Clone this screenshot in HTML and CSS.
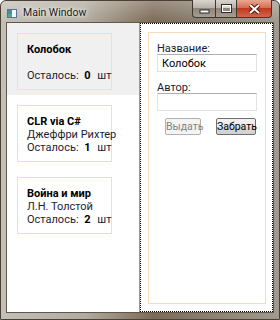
FILE: index.html
```html
<!DOCTYPE html>
<html lang="ru">
<head>
    <meta charset="UTF-8">
    <title>Main Window</title>
    <link rel="stylesheet" href="styles.css">
</head>
<body>
    <div class="window">
        <div class="titlebar">
            <svg class="app-icon" width="10" height="9" viewBox="0 0 10 9">
                <rect x="0.5" y="0.5" width="9" height="8" fill="#f4f6f8" stroke="#5b7390"/>
                <rect x="1" y="1" width="4" height="7" fill="#3b8fb0"/>
                <rect x="1" y="5" width="4" height="3" fill="#4fae6a"/>
            </svg>
            <span class="title">Main Window</span>
            <div class="caption-buttons">
                <div class="cap-btn cap-min">
                    <svg width="11" height="5" viewBox="0 0 11 5"><rect x="1" y="1" width="9" height="3" fill="#fff" stroke="#2e2b28" stroke-width="1"/></svg>
                </div>
                <div class="cap-btn cap-max">
                    <svg width="11" height="9" viewBox="0 0 11 9"><rect x="1" y="1" width="9" height="7" fill="none" stroke="#2e2b28" stroke-width="2"/><rect x="1.5" y="1.5" width="8" height="6" fill="none" stroke="#fff" stroke-width="1"/><rect x="2" y="2.5" width="7" height="1" fill="#fff"/></svg>
                </div>
                <div class="cap-btn cap-close">
                    <svg width="13" height="10" viewBox="0 0 13 10"><path d="M2 1 L11 9 M11 1 L2 9" stroke="#4a1a10" stroke-width="4"/><path d="M2 1 L11 9 M11 1 L2 9" stroke="#fff" stroke-width="2"/></svg>
                </div>
            </div>
        </div>

        <div class="client">
            <div class="book-list">
                <div class="book-item selected">
                    <div class="book-card">
                        <div class="book-title">Колобок</div>
                        <div class="book-author">&nbsp;</div>
                        <div class="book-left">Осталось: <b class="count">0</b> шт</div>
                    </div>
                </div>
                <div class="book-item">
                    <div class="book-card">
                        <div class="book-title">CLR via C#</div>
                        <div class="book-author">Джеффри Рихтер</div>
                        <div class="book-left">Осталось: <b class="count">1</b> шт</div>
                    </div>
                </div>
                <div class="book-item">
                    <div class="book-card">
                        <div class="book-title">Война и мир</div>
                        <div class="book-author">Л.Н. Толстой</div>
                        <div class="book-left">Осталось: <b class="count">2</b> шт</div>
                    </div>
                </div>
            </div>

            <div class="details">
                <div class="details-box">
                    <label class="field-label" for="title">Название:</label>
                    <input class="field" type="text" id="title" value="Колобок">
                    <label class="field-label" for="author">Автор:</label>
                    <input class="field" type="text" id="author">
                    <div class="actions">
                        <button class="btn btn-issue" disabled>Выдать</button>
                        <button class="btn btn-take">Забрать</button>
                    </div>
                </div>
            </div>
        </div>
    </div>
</body>
</html>
```

FILE: styles.css
```css
body {
    margin: 0;
    padding: 0;
    font-family: Roboto, "Noto Sans", sans-serif;
    font-size: 11px;
    background: #fff;
}
.window {
    width: 280px;
    height: 320px;
    box-sizing: border-box;
    border: 1px solid #4a4036;
    border-radius: 6px 6px 0 0;
    background: linear-gradient(90deg, #c3c0b8 0%, #b2ab9f 30%, #7c6a57 55%, #85786a 68%, #a29a8f 100%);
    display: flex;
    flex-direction: column;
}
.titlebar {
    height: 21px;
    display: flex;
    align-items: center;
    background: linear-gradient(rgba(255, 255, 255, 0.25), rgba(255, 255, 255, 0));
    border-radius: 5px 5px 0 0;
}
.app-icon {
    margin-left: 6px;
    margin-top: 3px;
}
.title {
    margin-left: 6px;
    margin-top: 2px;
    font-size: 10.5px;
    color: #1a1a1a;
    text-shadow: 0 0 6px #fff, 0 0 3px rgba(255, 255, 255, 0.9);
}
.caption-buttons {
    margin-left: auto;
    margin-right: 7px;
    align-self: flex-start;
    display: flex;
    margin-top: -1px;
}
.cap-btn {
    height: 18px;
    box-sizing: border-box;
    border: 1px solid #3c3731;
    border-top: none;
    display: flex;
    align-items: center;
    justify-content: center;
}
.cap-min {
    width: 23px;
    border-right: none;
    border-radius: 0 0 0 4px;
    background: linear-gradient(#d9d5cf 0%, #b9b2a8 45%, #8e8479 50%, #a79e92 100%);
}
.cap-min svg {
    margin-top: 5px;
}
.cap-max {
    width: 22px;
    background: linear-gradient(#d9d5cf 0%, #b9b2a8 45%, #8e8479 50%, #a79e92 100%);
}
.cap-close {
    width: 35px;
    border-left: none;
    border-radius: 0 0 4px 0;
    background: linear-gradient(#e9a893 0%, #d76e55 45%, #c0391f 50%, #d2664a 100%);
}
.client {
    flex: 1;
    margin: 0 5px 6px 5px;
    border: 1px solid #5e574d;
    background: #fff;
    display: flex;
}
.book-list {
    width: 132px;
    border-right: 1px solid #9a9a9a;
}
.book-item {
    height: 72px;
    box-sizing: border-box;
    padding: 10px 0 0 10px;
}
.book-item.selected {
    background: #f0f0f0;
}
.book-card {
    width: 95px;
    box-sizing: border-box;
    border: 1px solid #fbdcba;
    padding: 9px 0 7px 9px;
    line-height: 13px;
    white-space: nowrap;
    color: #1c1c34;
}
.book-title {
    font-weight: bold;
    color: #000;
}
.count {
    color: #000;
    margin: 0 4px 0 3px;
}
.details {
    flex: 1;
    border: 1px dotted #000;
    display: flex;
}
.details-box {
    flex: 1;
    margin: 8px 6px 7px 7px;
    border: 1px solid #fbdcba;
    padding: 10px 8px 0 8px;
}
.field-label {
    display: block;
    line-height: 11px;
    color: #1c1c34;
}
.field {
    display: block;
    width: 100px;
    height: 18px;
    box-sizing: border-box;
    margin: 0;
    padding: 0 4px;
    border: 1px solid #e2e3ea;
    border-top-color: #abadb3;
    font-family: inherit;
    font-size: 11px;
    color: #000;
}
.field + .field-label {
    margin-top: 10px;
}
.actions {
    width: 99px;
    display: flex;
    justify-content: space-between;
    padding-left: 8px;
    box-sizing: border-box;
    margin-top: 7px;
}
.btn {
    height: 17px;
    padding: 0;
    font-family: inherit;
    font-size: 10.5px;
    line-height: 13px;
    border: 1px solid #707070;
    border-radius: 2px;
    background: linear-gradient(#f2f2f2 0%, #ebebeb 50%, #dddddd 50%, #cfcfcf 100%);
    color: #000;
}
.btn-issue {
    width: 36px;
}
.btn-take {
    width: 40px;
}
.btn:disabled {
    border-color: #adb2b5;
    background: #f4f4f4;
    color: #838383;
}
```
